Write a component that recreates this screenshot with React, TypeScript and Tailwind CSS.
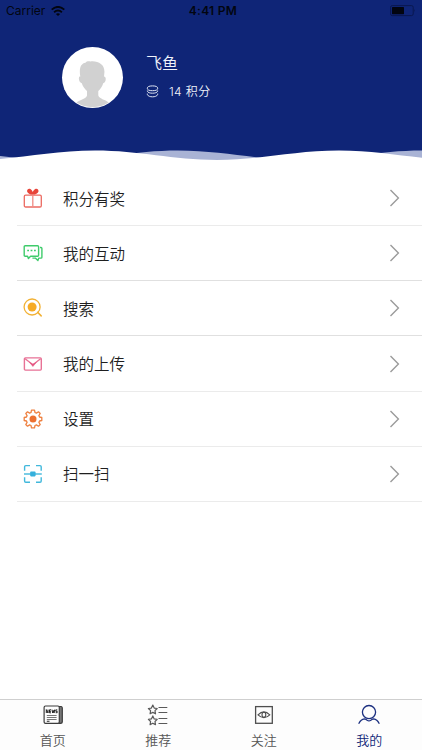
import type { ReactNode } from "react";

interface MenuItem {
    label: string;
    icon: ReactNode;
    line: string;
}

interface TabItem {
    label: string;
    icon: ReactNode;
    active?: boolean;
}

function GiftIcon() {
    return (
        <svg viewBox="0 0 20 20" className="h-5 w-5" fill="none" stroke="#ec6a61" strokeWidth="1.3">
            <rect x="1.3" y="7.1" width="17" height="11.9" rx="1.3" />
            <path d="M9.8 7v11.8" stroke="#f08b84" />
            <path d="M9.8 6.6C7.6 6.8 4.6 5.4 4.1 3.4 3.8 1.4 5.8 0 7.4 1.1 8.8 2 9.4 3.2 9.8 4.3 10.2 3.2 10.8 2 12.2 1.1 13.8 0 15.8 1.4 15.5 3.4 15 5.4 12 6.8 9.8 6.6Z" fill="#e7453a" stroke="none" />
        </svg>
    );
}

function ChatIcon() {
    return (
        <svg viewBox="0 0 20 20" className="h-5 w-5" fill="none" stroke="#3fcb6b" strokeWidth="1.4" strokeLinejoin="round">
            <path d="M2.2 2.7H14.6Q15.6 2.7 15.6 3.7V12.2Q15.6 13.2 14.6 13.2H7.6L5.4 15.5 4.6 13.2H2.2Q1.2 13.2 1.2 12.2V3.7Q1.2 2.7 2.2 2.7Z" />
            <path d="M17 4.5H18Q18.9 4.5 18.9 5.4V14.2Q18.9 15.1 18 15.1H15.7L14.9 17.6 12.3 15.1H9.4" />
            <path d="M4.2 7.5h1.8M7.6 7.5h1.8M11 7.5h1.8" strokeWidth="1.7" />
        </svg>
    );
}

function SearchIcon() {
    return (
        <svg viewBox="0 0 20 20" className="h-5 w-5" fill="none" stroke="#f2b133" strokeWidth="1.3">
            <circle cx="9.1" cy="9" r="8" />
            <circle cx="9.1" cy="9" r="4.5" fill="#f6ab25" stroke="none" />
            <path d="M14.7 14.4 18.2 17.9" strokeLinecap="round" strokeWidth="1.5" />
        </svg>
    );
}

function MailIcon() {
    return (
        <svg viewBox="0 0 20 20" className="h-5 w-5" fill="none" stroke="#e87296" strokeWidth="1.4">
            <rect x="1.4" y="3.9" width="16.9" height="12.2" rx="1" />
            <path d="M2.1 4.8 9.9 10.7 17.6 4.8" />
            <path d="M6.4 8.3 9.9 10.2 13.4 8.3 9.9 12.6Z" fill="#e45480" stroke="#e45480" strokeWidth=".4" />
        </svg>
    );
}

function GearIcon() {
    return (
        <svg viewBox="0 0 20 20" className="h-5 w-5" fill="none" stroke="#ee8040" strokeWidth="1.3" strokeLinejoin="round">
            <path d="M8.5 1.2H11.5L12 3.5 13.4 4.1 15.5 2.8 17.2 4.5 15.9 6.6 16.5 8 18.8 8.5V11.5L16.5 12 15.9 13.4 17.2 15.5 15.5 17.2 13.4 15.9 12 16.5 11.5 18.8H8.5L8 16.5 6.6 15.9 4.5 17.2 2.8 15.5 4.1 13.4 3.5 12 1.2 11.5V8.5L3.5 8 4.1 6.6 2.8 4.5 4.5 2.8 6.6 4.1 8 3.5Z" />
            <circle cx="10" cy="10" r="3.5" fill="#ec7030" stroke="none" />
        </svg>
    );
}

function ScanIcon() {
    return (
        <svg viewBox="0 0 20 20" className="h-5 w-5" fill="none" stroke="#41b8dc" strokeWidth="1.4">
            <path d="M1.6 6.8V2.8Q1.6 1.6 2.8 1.6H7M13 1.6h4Q18.2 1.6 18.2 2.8v4M18.2 13.2V17Q18.2 18.2 17 18.2H13M7 18.2H2.8Q1.6 18.2 1.6 17V13.2" />
            <path d="M1 10H18.8" />
            <rect x="7.2" y="7.6" width="5.4" height="4.8" rx=".8" fill="#35b0dc" stroke="none" />
        </svg>
    );
}

function NewsIcon() {
    return (
        <svg viewBox="0 0 22 22" className="h-[22px] w-[22px]" fill="none" stroke="#3c3c3c" strokeWidth="1.2">
            <path d="M17 2.5h2.2Q20.3 2.7 20.3 4v13.5Q20.3 19.4 18.4 19.4H4" fill="#777" />
            <rect x="2.1" y="2" width="15.2" height="17.4" rx="1.4" fill="#fdfdfd" />
            {/* masthead lettering */}
            <path d="M4.3 9V5.6L6 9V5.6M9 5.8H7.5V8.8H9M7.5 7.3H9M10 5.6 10.7 9 11.4 6.5 12 9 12.7 5.6M15.3 5.9H13.8V7.3H15.2V8.7H13.7" stroke="#222" strokeWidth="1" />
            <path d="M4.8 11.5h9.8M4.8 13.5h9.8M4.8 15.5h9.8" stroke="#777" strokeWidth="1" />
            <path d="M4.8 17.3h2.7" stroke="#444" />
        </svg>
    );
}

function StarListIcon() {
    return (
        <svg viewBox="0 0 22 22" className="h-[22px] w-[22px]" fill="none" stroke="#5a5a5a" strokeWidth="1.2" strokeLinejoin="round">
            <path d="M5.8 1.1 7.2 4.1 10.2 4.5 8 6.7 8.5 9.8 5.8 8.4 3.1 9.8 3.6 6.7 1.4 4.5 4.4 4.1Z" />
            <path d="M5.8 11.9 7.2 14.9 10.2 15.3 8 17.5 8.5 20.6 5.8 19.2 3.1 20.6 3.6 17.5 1.4 15.3 4.4 14.9Z" />
            <path d="M11.5 3.5h8.8M11.5 8.5h8.8M11.5 14.5h8.8M11.5 19.5h8.8" strokeWidth="1" />
        </svg>
    );
}

function EyeIcon() {
    return (
        <svg viewBox="0 0 22 22" className="h-[22px] w-[22px]" fill="none" stroke="#4f4f4f" strokeWidth="1.1">
            <rect x="2.6" y="2.6" width="16.7" height="16.7" strokeWidth="1.3" />
            <path d="M5 10.8Q10.9 4.9 16.8 10.8 10.9 16.3 5 10.8Z" />
            <ellipse cx="10.9" cy="10.7" rx="1.9" ry="2.5" />
        </svg>
    );
}

function PersonIcon() {
    return (
        <svg viewBox="0 0 22 22" className="h-[22px] w-[22px]" fill="none" stroke="#1c3080" strokeWidth="1.3" strokeLinecap="round">
            <circle cx="11" cy="8.1" r="6.6" />
            <path d="M1 19.3Q2.9 15.3 6.3 14.9C8.3 14.9 9.2 16.9 11 16.9S13.7 14.9 15.7 14.9Q19.1 15.3 21 19.3" />
        </svg>
    );
}

const menu: MenuItem[] = [
    { label: "积分有奖", icon: <GiftIcon />, line: "h-px bg-[#ebebeb]" },
    { label: "我的互动", icon: <ChatIcon />, line: "h-px bg-[#e0e0e0]" },
    { label: "搜索", icon: <SearchIcon />, line: "h-px bg-[#e0e0e0]" },
    { label: "我的上传", icon: <MailIcon />, line: "h-px bg-[#ebebeb]" },
    { label: "设置", icon: <GearIcon />, line: "h-px bg-[#ebebeb]" },
    { label: "扫一扫", icon: <ScanIcon />, line: "h-px bg-[#ebebeb]" },
];

const tabs: TabItem[] = [
    { label: "首页", icon: <NewsIcon /> },
    { label: "推荐", icon: <StarListIcon /> },
    { label: "关注", icon: <EyeIcon /> },
    { label: "我的", icon: <PersonIcon />, active: true },
];

function StatusBar() {
    return (
        <div className="grid h-[22px] grid-cols-3 items-center pl-[6px] pr-[6px] font-['Inter','Liberation_Sans',sans-serif] text-[12px] font-normal text-[#020510]">
            <div className="flex items-center gap-[6px]">
                <span>Carrier</span>
                <svg viewBox="0 0 14 10" className="h-[10px] w-[14px]" fill="none" stroke="#020510" strokeWidth="1.9">
                    <path d="M.7 3.6Q7-1.8 13.3 3.6" />
                    <path d="M3.1 6.2Q7 3 10.9 6.2" />
                    <path d="M7 10 4.9 7.9Q7 6.4 9.1 7.9Z" fill="#020510" stroke="none" />
                </svg>
            </div>
            <span className="pl-1 text-center font-semibold tracking-[0.3px]">4:41 PM</span>
            <svg viewBox="0 0 26 12" className="h-3 w-[26px] justify-self-end">
                <rect x=".6" y=".6" width="22.6" height="10" rx="1.6" fill="none" stroke="#0a1850" strokeWidth="1" />
                <rect x="2" y="2" width="12" height="7.2" rx=".6" fill="#020510" />
                <path d="M24.3 4Q25.6 5.6 24.3 7.2Z" fill="#0a1850" />
            </svg>
        </div>
    );
}

function Profile() {
    return (
        <div className="flex pl-[62px] pt-[25px]">
            <svg viewBox="0 0 61 61" className="h-[61px] w-[61px] shrink-0 rounded-full bg-white">
                <path d="M14.5 55.5C18 52.5 24 52 25 48.5V44C22.5 41.5 20.5 39 19.8 36.2 17.5 36 16.5 32.5 17 30.5 17.2 29.3 17.8 29.3 18.3 29.5 16.8 21 19 16.5 23.5 15.8 24.5 14 27 14 28.5 14.4 36 13.5 43 17.5 42.4 25.5L42 29.5C44.8 29.5 44 35.8 41.2 36.2 40.4 39.2 38.4 42 36.3 44V48.5C37.5 52 44 53 46.8 55.5A30.5 30.5 0 0 1 14.5 55.5Z" fill="#d1d1d1" />
            </svg>
            <div className="flex flex-col pl-[23px] pt-1 text-[#f1f4fb]">
                <span className="text-[16px] leading-6">飞鱼</span>
                <div className="mt-2 flex items-center gap-[10px]">
                    <svg viewBox="0 0 13 13" className="mb-px h-[13px] w-[13px]" fill="none" stroke="#dfe5f4" strokeWidth="1">
                        <ellipse cx="6.5" cy="3.3" rx="5.2" ry="2.4" />
                        <path d="M1.3 5.5C.6 9.1 12.4 9.1 11.7 5.5M1.3 8.6C.6 12.9 12.4 12.9 11.7 8.6" />
                    </svg>
                    <span className="text-[12px] leading-[18px] tracking-[0.4px]">14 积分</span>
                </div>
            </div>
        </div>
    );
}

export default function App() {
    return (
        <div className="flex h-[750px] w-[422px] flex-col overflow-hidden bg-white font-['Inter','Noto_Sans_CJK_SC',sans-serif] font-[350]">
            <header className="h-[147px] shrink-0 bg-[#0f2577]">
                <StatusBar />
                <Profile />
            </header>

            {/* Overlapping waves along the lower edge of the header */}
            <svg viewBox="0 0 422 14" className="h-[14px] w-[422px] shrink-0 bg-[#0f2577]">
                <path d="M-66 3.6C-21.6 3.6 11.6 13 56 13S133.6 3.6 178 3.6 255.6 13 300 13 377.6 3.6 422 3.6V14H-66Z" fill="#a9b3d5" />
                <path d="M-27 13C17.4 13 50.6 3.6 95 3.6S172.6 13 217 13 294.6 3.6 339 3.6 416.6 13 461 13V15H-27Z" fill="#fff" />
            </svg>

            <main className="flex flex-1 flex-col pt-[10.2px]">
                {menu.map((item) => (
                    <div key={item.label} className="flex h-[55.1px] flex-col pl-[17px]">
                        <div className="flex flex-1 items-center pl-[6px] pr-[22px]">
                            {item.icon}
                            <span className="ml-5 flex-1 pt-[3px] text-[15.5px] leading-6 text-[#1f1f1f]">{item.label}</span>
                            <svg viewBox="0 0 11 18" className="h-[18px] w-[11px]" fill="none" stroke="#9b9b9b" strokeWidth="1.4">
                                <path d="M1.5 1 9.4 9 1.5 17" />
                            </svg>
                        </div>
                        <div className={item.line} />
                    </div>
                ))}
            </main>

            <nav className="grid h-[51px] shrink-0 grid-cols-4 border-t border-[#cfcfcf] bg-[#fdfdfd]">
                {tabs.map((tab) => (
                    <div key={tab.label} className="flex flex-col items-center pt-1">
                        {tab.icon}
                        <span className={`mt-1 text-[13px] leading-5 ${tab.active ? "text-[#0f2577]" : "text-[#555555]"}`}>{tab.label}</span>
                    </div>
                ))}
            </nav>
        </div>
    );
}
